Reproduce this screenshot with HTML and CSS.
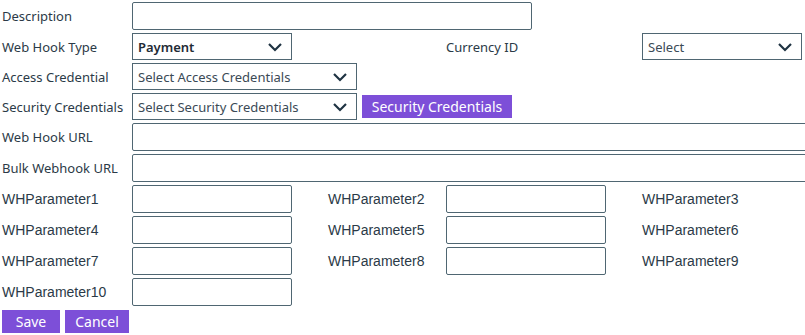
FILE: index.html
```html
<!DOCTYPE html>
<html lang="en">
<head>
  <meta charset="utf-8" />
  <title>Web Hook</title>
  <link rel="stylesheet" href="styles.css">
</head>
<body>

<form class="hook-form">
  <label class="lbl">Description</label>
  <input class="txt wide" type="text">

  <label class="lbl">Web Hook Type</label>
  <div class="sel">
    <select class="picked"><option>Payment</option></select>
    <svg viewBox="0 0 16 10"><path d="M2 2l6 6 6-6" /></svg>
  </div>
  <span></span>
  <label class="lbl">Currency ID</label>
  <div class="sel">
    <select><option>Select</option></select>
    <svg viewBox="0 0 16 10"><path d="M2 2l6 6 6-6" /></svg>
  </div>

  <label class="lbl">Access Credential</label>
  <div class="sel big span4">
    <select><option>Select Access Credentials</option></select>
    <svg viewBox="0 0 16 10"><path d="M2 2l6 6 6-6" /></svg>
  </div>

  <label class="lbl">Security Credentials</label>
  <div class="inline span4">
    <div class="sel big">
      <select><option>Select Security Credentials</option></select>
      <svg viewBox="0 0 16 10"><path d="M2 2l6 6 6-6" /></svg>
    </div>
    <button type="button" class="btn sec">Security Credentials</button>
  </div>

  <label class="lbl">Web Hook URL</label>
  <input class="txt url" type="text">

  <label class="lbl">Bulk Webhook URL</label>
  <input class="txt url" type="text">

  <label class="lbl param">WHParameter1</label>
  <input class="txt" type="text">
  <label class="lbl param">WHParameter2</label>
  <input class="txt" type="text">
  <label class="lbl param">WHParameter3</label>

  <label class="lbl param">WHParameter4</label>
  <input class="txt" type="text">
  <label class="lbl param">WHParameter5</label>
  <input class="txt" type="text">
  <label class="lbl param">WHParameter6</label>

  <label class="lbl param">WHParameter7</label>
  <input class="txt" type="text">
  <label class="lbl param">WHParameter8</label>
  <input class="txt" type="text">
  <label class="lbl param">WHParameter9</label>

  <label class="lbl param">WHParameter10</label>
  <input class="txt" type="text">
</form>

<div class="actions">
  <button type="button" class="btn save">Save</button>
  <button type="button" class="btn cancel">Cancel</button>
</div>

</body>
</html>
```

FILE: styles.css
```css
body {
  margin: 0;
  padding: 2px 0 0 2px;
  font-family: "Noto Sans", sans-serif;
  font-size: 13px;
  color: #2b3a47;
  background-color: #ffffff;
  overflow: hidden;
}

.hook-form {
  display: grid;
  grid-template-columns: 130px 196px 118px 196px auto;
  row-gap: 3px;
  align-items: center;
}

.lbl {
  white-space: nowrap;
  color: #2b3a47;
}

.lbl.param {
  font-family: "Liberation Sans", Arial, sans-serif;
  font-size: 14px;
}

.txt {
  box-sizing: border-box;
  width: 160px;
  height: 28px;
  margin: 0;
  border: 1px solid #4f6672;
  border-radius: 2px;
  padding: 0 5px;
  font-family: inherit;
}

.txt.wide {
  grid-column: 2 / 6;
  width: 400px;
}

.txt.url {
  grid-column: 2 / 6;
  width: 700px;
}

.span4 {
  grid-column: 2 / 6;
}

.inline {
  display: flex;
  align-items: center;
  gap: 5px;
}

.sel {
  position: relative;
  width: 160px;
  height: 27px;
}

.sel.big {
  width: 225px;
}

.sel select {
  box-sizing: border-box;
  width: 100%;
  height: 100%;
  margin: 0;
  padding: 0 24px 0 5px;
  border: 1px solid #4f6672;
  border-radius: 0;
  background: #ffffff;
  appearance: none;
  font-family: "Noto Sans", sans-serif;
  font-size: 13px;
  color: #3b4a56;
}

.sel select.picked {
  font-weight: 600;
  color: #1f2b36;
}

.sel svg {
  position: absolute;
  right: 9px;
  top: 9px;
  width: 16px;
  height: 10px;
  fill: none;
  stroke: #1f3342;
  stroke-width: 2.2;
  pointer-events: none;
}

.btn {
  height: 23px;
  padding: 0;
  border: none;
  background-color: #7d4fd8;
  color: #ffffff;
  font-family: "Noto Sans", sans-serif;
  font-size: 14px;
  cursor: pointer;
}

.btn.sec {
  width: 150px;
}

.btn.save {
  width: 58px;
}

.btn.cancel {
  width: 64px;
}

.actions {
  display: flex;
  gap: 5px;
  margin-top: 4px;
}
```
